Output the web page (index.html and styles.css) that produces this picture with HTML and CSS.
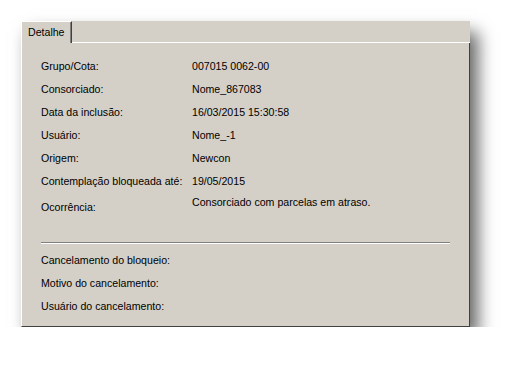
FILE: index.html
```html
<!DOCTYPE html>
<html lang="pt">
  <head>
    <meta charset="UTF-8" />
    <title>Detalhe</title>
    <link rel="stylesheet" href="styles.css">
  </head>
  <body>
    <div class="window">
      <div class="tabs">
        <div class="tab">Detalhe</div>
        <div class="tab-fill"></div>
      </div>
      <div class="panel">
        <div class="details">
          <div class="row"><span class="label">Grupo/Cota:</span><span class="value">007015 0062-00</span></div>
          <div class="row"><span class="label">Consorciado:</span><span class="value">Nome_867083</span></div>
          <div class="row"><span class="label">Data da inclusão:</span><span class="value">16/03/2015 15:30:58</span></div>
          <div class="row"><span class="label">Usuário:</span><span class="value">Nome_-1</span></div>
          <div class="row"><span class="label">Origem:</span><span class="value">Newcon</span></div>
          <div class="row"><span class="label">Contemplação bloqueada até:</span><span class="value">19/05/2015</span></div>
          <div class="row row-tall"><span class="label">Ocorrência:</span><span class="value">Consorciado com parcelas em atraso.</span></div>
        </div>
        <hr class="separator" />
        <div class="details">
          <div class="row"><span class="label">Cancelamento do bloqueio:</span><span class="value"></span></div>
          <div class="row"><span class="label">Motivo do cancelamento:</span><span class="value"></span></div>
          <div class="row"><span class="label">Usuário do cancelamento:</span><span class="value"></span></div>
        </div>
      </div>
    </div>
  </body>
</html>
```

FILE: styles.css
```css
* {
  margin: 0;
  padding: 0;
  box-sizing: border-box;
}
body {
  background: #ffffff;
  padding: 21px 0 0 21px;
  font-family: "Liberation Sans", Arial, sans-serif;
  font-size: 10.6px;
  color: #000;
}
.window {
  width: 449px;
  height: 306px;
  display: flex;
  flex-direction: column;
  background: #d4d0c8;
  box-shadow: 8px 11px 16px rgba(0, 0, 0, 0.6);
}
.tabs {
  display: flex;
  height: 22px;
}
.tab {
  width: 51px;
  padding: 4px 0 0 6px;
  white-space: nowrap;
  border-left: 1px solid #ffffff;
  border-top: 1px solid #ffffff;
  border-right: 1px solid #404040;
  box-shadow: inset -1px 0 0 #808080;
}
.tab-fill {
  flex: 1;
  border-bottom: 1px solid #ffffff;
}
.panel {
  flex: 1;
  padding: 12px 19px 0 19px;
  border-left: 1px solid #ffffff;
  border-right: 1px solid #404040;
  border-bottom: 1px solid #404040;
}
.row {
  display: flex;
  height: 23px;
  line-height: 23px;
  white-space: nowrap;
}
.label {
  width: 151px;
  flex-shrink: 0;
}
.row-tall {
  height: 25px;
}
.row-tall .label {
  padding-top: 3px;
}
.row-tall .value {
  margin-top: -2px;
}
.separator {
  border: none;
  border-top: 1px solid #808080;
  border-bottom: 1px solid #ffffff;
  margin: 24px 0 5px 0;
  width: 409px;
}
```
